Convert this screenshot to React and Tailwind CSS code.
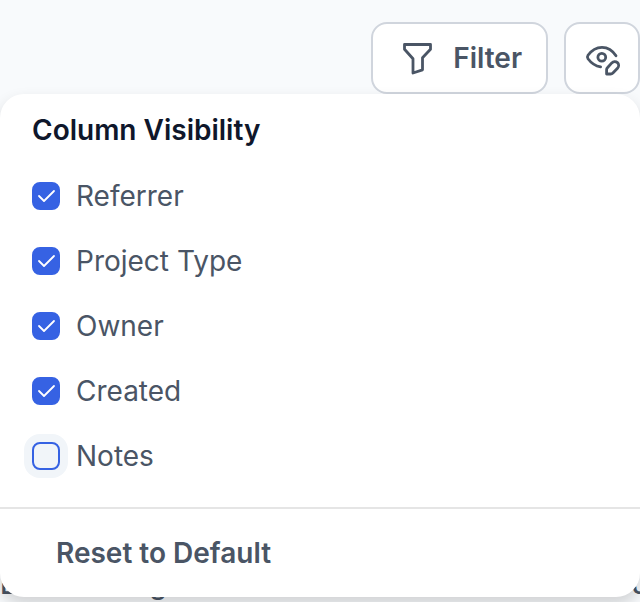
import { useState } from "react";

const DEFAULT_COLUMNS = [
  { id: "referrer", label: "Referrer", visible: true },
  { id: "project-type", label: "Project Type", visible: true },
  { id: "owner", label: "Owner", visible: true },
  { id: "created", label: "Created", visible: true },
  { id: "notes", label: "Notes", visible: false },
];

const FilterIcon = () => (
  <svg className="size-9" viewBox="0 0 36 36" fill="none" stroke="currentColor" strokeWidth="2.8" strokeLinejoin="round" aria-hidden="true">
    <path d="M7.5 4.5H33.5V9.2L25.5 17.8V29.8L16 33V18.8L7.5 9.2Z" />
  </svg>
);

const EyeEditIcon = () => (
  <svg className="size-9" viewBox="0 0 36 36" fill="none" stroke="currentColor" strokeWidth="2.8" strokeLinecap="round" strokeLinejoin="round" aria-hidden="true">
    <path d="M32 15.8C28.6 10.4 23.7 7.3 18 7.3C12 7.3 7.2 10.8 4 15.3C3.2 16.5 3.2 17.6 4 18.8C7.2 23.2 11.4 26.1 16.6 26.9" />
    <circle cx="17.8" cy="17.2" r="3.9" />
    <path d="M22.6 34V29.8C22.6 29 22.8 28.4 23.4 27.8L27.8 22.9C29.4 21.3 31.8 21.2 33.4 22.6C35 24.2 35 26.6 33.5 28.2L28.9 33C28.2 33.7 27.5 34 26.6 34Z" />
  </svg>
);

const ColumnToggle = ({ column, onToggle }) => (
  <li className="flex items-center gap-4">
    <span className="relative flex">
      <input
        id={column.id}
        type="checkbox"
        checked={column.visible}
        onChange={() => onToggle(column.id)}
        className="peer size-7 appearance-none rounded-lg border-2 border-[#3662e3] bg-slate-100 ring-8 ring-slate-100 checked:bg-[#3662e3] checked:ring-0"
      />
      <svg
        className="pointer-events-none absolute inset-0 hidden size-7 text-white peer-checked:block"
        viewBox="0 0 28 28"
        fill="none"
        stroke="currentColor"
        strokeWidth="1.8"
        strokeLinecap="round"
        strokeLinejoin="round"
        aria-hidden="true"
      >
        <path d="M7 14L12 19L22 9" />
      </svg>
    </span>
    <label htmlFor={column.id} className="text-[28px] leading-9">
      {column.label}
    </label>
  </li>
);

const App = () => {
  const [columns, setColumns] = useState(DEFAULT_COLUMNS);

  const toggleColumn = (id) => {
    setColumns(columns.map((c) => (c.id === id ? { ...c, visible: !c.visible } : c)));
  };

  return (
    <div className="flex min-h-screen flex-col justify-between overflow-hidden bg-slate-50 font-['Inter',sans-serif] text-gray-600">
      <header className="relative z-10 flex justify-end gap-4 pt-[22px]">
        <button type="button" className="flex h-[72px] items-center gap-5 rounded-2xl border-2 border-[#d0d5dd] bg-white px-6 text-[28px] font-semibold">
          <FilterIcon />
          Filter
        </button>
        <button type="button" aria-label="Edit visible columns" className="flex h-[72px] w-19 items-center justify-center rounded-2xl border-2 border-[#d0d5dd] bg-white">
          <EyeEditIcon />
        </button>

        {/* Dropdown over the table */}
        <div className="absolute inset-x-0 top-full rounded-3xl bg-white shadow-[0_8px_16px_rgba(0,0,0,0.16)]">
          <div className="px-8 pt-4 pb-[33px]">
            <h2 className="text-[28px] leading-10 font-semibold text-slate-900">Column Visibility</h2>
            <ul className="mt-7 flex flex-col gap-[29px]">
              {columns.map((column) => (
                <ColumnToggle key={column.id} column={column} onToggle={toggleColumn} />
              ))}
            </ul>
          </div>
          <div className="border-t-2 border-[#e5e5e5] px-14 py-6">
            <button type="button" onClick={() => setColumns(DEFAULT_COLUMNS)} className="block text-[28px] leading-10 font-semibold">
              Reset to Default
            </button>
          </div>
        </div>
      </header>

      {/* Table headings, the last one runs off the edge */}
      <div className="flex justify-between pb-1 text-[28px] leading-7 font-medium whitespace-nowrap">
        <span>Lead Pricing</span>
        <span className="w-2">Job</span>
      </div>
    </div>
  );
};

export default App;
